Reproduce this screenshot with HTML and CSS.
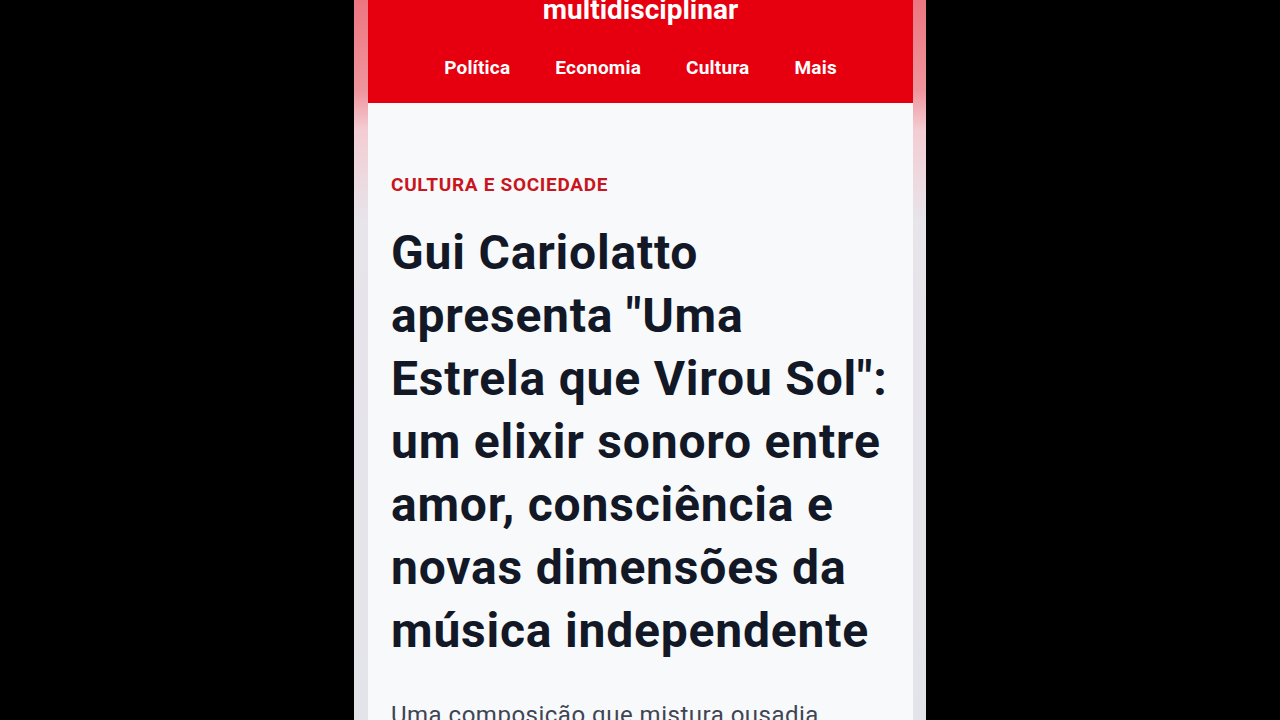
FILE: index.html
```html
<!DOCTYPE html>
<html>
<head>
  <title>Cultura e Sociedade</title>
  <meta name="viewport" content="width=device-width, initial-scale=1.0">
  <link rel="stylesheet" href="styles.css">
</head>
<body>

  <div class="phone">
    <div class="edge edge-left"></div>

    <div class="screen">
      <!-- Site header -->
      <header class="site-header">
        <div class="brand">multidisciplinar</div>
        <nav class="menu">
          <a href="#">Política</a>
          <a href="#">Economia</a>
          <a href="#">Cultura</a>
          <a href="#">Mais</a>
        </nav>
      </header>

      <!-- Article -->
      <article class="article">
        <div class="category">CULTURA E SOCIEDADE</div>
        <h1 class="headline">Gui Cariolatto apresenta "Uma Estrela que Virou Sol": um elixir sonoro entre amor, consciência e novas dimensões da música independente</h1>
        <p class="lead">Uma composição que mistura ousadia</p>
      </article>
    </div>

    <div class="edge edge-right"></div>
  </div>

</body>
</html>
```

FILE: styles.css
```css
body {
  background: #000;
  margin: 0;
  height: 720px;
  overflow: hidden;
  font-family: Roboto, 'Liberation Sans', sans-serif;
  display: flex;
  justify-content: center;
}

.phone {
  width: 572px;
  height: 720px;
  display: flex;
}

.edge {
  height: 720px;
  background: linear-gradient(to bottom, #ec7680 0px, #ef949c 90px, #f3cdd3 130px, #e7e4ea 220px, #e3e4e9 720px);
}

.edge-left {
  width: 14px;
}

.edge-right {
  width: 13px;
}

.screen {
  width: 545px;
  background: #f8f9fb;
  overflow: hidden;
}

.site-header {
  background: #e6000f;
  height: 103px;
  box-sizing: border-box;
  text-align: center;
  overflow: hidden;
}

.brand {
  color: #fff;
  font-size: 28px;
  font-weight: bold;
  line-height: 32px;
  margin-top: -6px;
}

.menu {
  display: flex;
  justify-content: center;
  gap: 45px;
  margin-top: 30px;
}

.menu a {
  color: #fff;
  text-decoration: none;
  font-size: 19px;
  font-weight: bold;
  line-height: 24px;
  letter-spacing: 0.2px;
}

.article {
  padding: 70px 16px 0 23px;
}

.category {
  color: #c8161e;
  font-size: 19px;
  font-weight: bold;
  line-height: 24px;
  letter-spacing: 0.7px;
}

.headline {
  color: #121826;
  font-size: 48px;
  font-weight: bold;
  line-height: 63px;
  letter-spacing: 0.8px;
  margin: 24px 0 0;
}

.lead {
  color: #3f4553;
  font-size: 24px;
  line-height: 38px;
  letter-spacing: 0.5px;
  margin: 34px 0 0;
}
```
